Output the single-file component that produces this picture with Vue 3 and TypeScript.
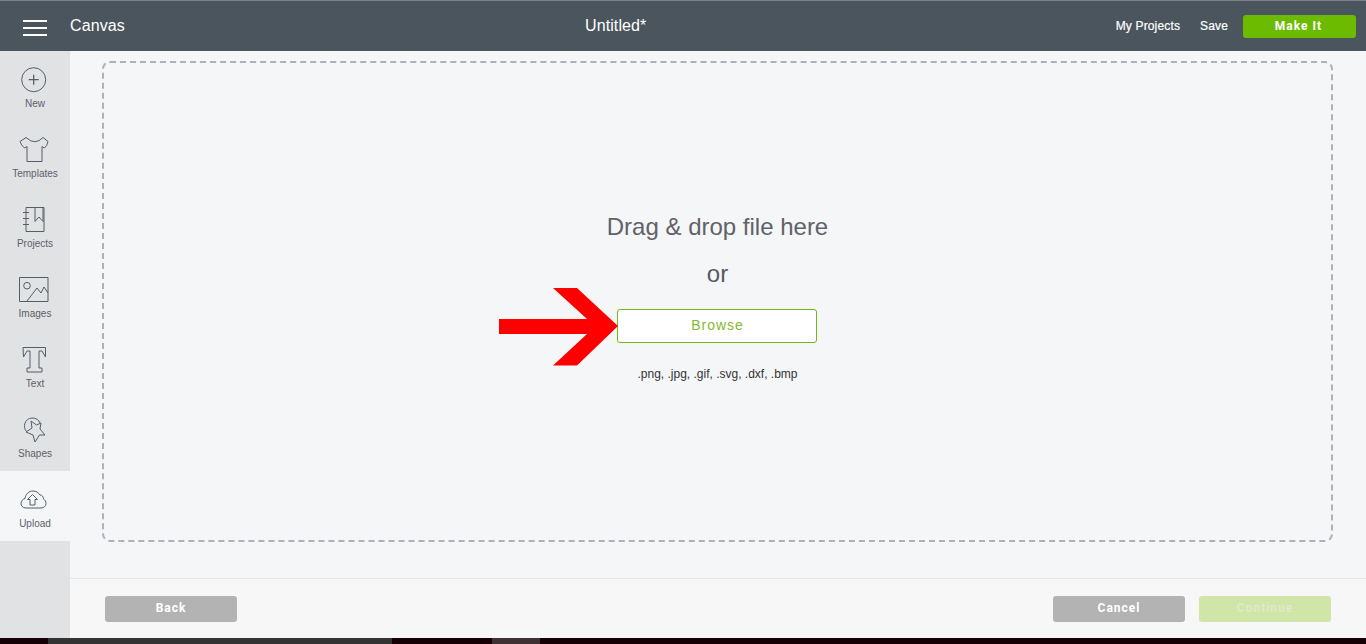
<script setup lang="ts">
const nav: { key: string; label: string }[] = [
  { key: 'new', label: 'New' },
  { key: 'templates', label: 'Templates' },
  { key: 'projects', label: 'Projects' },
  { key: 'images', label: 'Images' },
  { key: 'text', label: 'Text' },
  { key: 'shapes', label: 'Shapes' },
  { key: 'upload', label: 'Upload' },
]
</script>

<template>
  <div class="page">
    <header class="top">
      <button class="burger" aria-label="Menu"><i></i><i></i><i></i></button>
      <span class="brand">Canvas</span>
      <span class="title">Untitled*</span>
      <nav class="actions">
        <a class="link">My Projects</a>
        <a class="link">Save</a>
        <button class="make">Make It</button>
      </nav>
    </header>
    <div class="body">
      <aside class="side">
        <div v-for="n in nav" :key="n.key" class="item" :class="{ active: n.key === 'upload' }">
          <svg width="40" height="32" viewBox="0 0 40 32" fill="none" stroke="#565d67" stroke-width="1">
            <template v-if="n.key === 'new'">
              <circle cx="18.700" cy="15.700" r="12" />
              <path d="M18.700 10.700v10M13.700 15.700h10" stroke-width="1.300" />
            </template>
            <template v-else-if="n.key === 'templates'">
              <path d="M11 3.500Q20 12 28 3.500L33 7.500Q32 12 29.500 14L27 12.500V27.500H12V12.500L9.500 14Q6 11 5 7.500Z" />
            </template>
            <template v-else-if="n.key === 'projects'">
              <path d="M11 3.500h18v24H11z" />
              <path d="M8 8.500h6M8 14.500h6M8 20.500h6" />
              <path d="M20 3.500v14l4-4.500 4 4.500v-14" />
            </template>
            <template v-else-if="n.key === 'images'">
              <path d="M4.500 3.500h28.500v24H4.500z" />
              <circle cx="12" cy="11.700" r="3.300" />
              <path d="M12 27L22 14L26 19L29 13L33 19" />
            </template>
            <template v-else-if="n.key === 'text'">
              <path d="M8 3.500H30.500V13L27 7H24V24H27V28H12V24H15V7H12L8.500 13Z" />
            </template>
            <template v-else-if="n.key === 'shapes'">
              <path d="M11.500 17.500C7.500 13 9.500 4.500 17 4C21 3.800 24 6 25 9" />
              <path d="M16 7L21.500 11L26 9L25 15L30 21L24.500 21L20 28L18 21L11 18L17 14Z" />
            </template>
            <template v-else>
              <path d="M11 24C7.500 24 6 21.500 6 19.500C6 17 8 15 10 14.500C10.500 10 14 7 18 7C21 7 23.500 8.500 25 11C27 11 28.500 12.500 28.500 15C30 16 31 17.500 31 19.500C31 22 29 24 26 24Z" />
              <path d="M17.500 10.500L22.500 15.500H20V21H15V15.500H12.500Z" />
            </template>
          </svg>
          <span>{{ n.label }}</span>
        </div>
      </aside>
      <main class="main">
        <section class="stage">
          <div class="drop">
            <p class="drag">Drag &amp; drop file here</p>
            <p class="or">or</p>
            <div class="browse-wrap">
              <svg class="arrow" width="120" height="78" viewBox="0 0 120 78">
                <path d="M0 31H88L54 0H78L119 38L78 77.500H54L88 46H0Z" fill="#ff0000" />
              </svg>
              <button class="browse">Browse</button>
            </div>
            <p class="types">.png, .jpg, .gif, .svg, .dxf, .bmp</p>
          </div>
        </section>
        <footer class="foot">
          <button class="btn grey">Back</button>
          <span class="right">
            <button class="btn grey">Cancel</button>
            <button class="btn off">Continue</button>
          </span>
        </footer>
      </main>
    </div>
    <div class="strip"><i class="s1"></i><i class="s2"></i></div>
  </div>
</template>

<style>
html, body { margin: 0; background: #f5f6f8; overflow: hidden; }
</style>

<style scoped>
.page {
  width: 1366px;
  height: 644px;
  display: flex;
  flex-direction: column;
  font-family: "Liberation Sans", Arial, sans-serif;
  overflow: hidden;
}
.top {
  height: 50px;
  flex: none;
  border-top: 1px solid #7d8389;
  background: #4a555e;
  color: #fff;
  display: flex;
  align-items: center;
  position: relative;
}
.burger {
  width: 70px;
  height: 100%;
  background: none;
  border: 0;
  padding: 4px 0 0;
  display: flex;
  flex-direction: column;
  align-items: center;
  justify-content: center;
  gap: 5px;
}
.burger i { display: block; width: 24px; height: 2px; background: #fff; }
.brand { font-size: 16px; letter-spacing: 0.1px; margin-bottom: 1px; }
.title {
  position: absolute;
  left: 585px;
  top: 15px;
  font-size: 16px;
  letter-spacing: 0.1px;
  line-height: 20px;
}
.actions {
  margin-left: auto;
  display: flex;
  align-items: center;
  padding-right: 10px;
}
.link { font-size: 12px; letter-spacing: 0.15px; margin-right: 20px; -webkit-text-stroke: 0.2px #fff; }
.make {
  margin-left: -5px;
  width: 113px;
  height: 23px;
  padding: 0 2px 0 0;
  background: #6cbb00;
  border: 0;
  border-radius: 3px;
  color: #fff;
  font: bold 12px Roboto, sans-serif;
  letter-spacing: 1px;
}
.body { flex: 1; min-height: 0; display: flex; }
.side {
  width: 70px;
  flex: none;
  background: #e1e2e4;
  display: flex;
  flex-direction: column;
}
.item {
  height: 70px;
  flex: none;
  box-sizing: border-box;
  padding-top: 13px;
  display: flex;
  flex-direction: column;
  align-items: center;
  color: #5a616a;
  font-size: 10px;
}
.item span { margin-top: 2px; line-height: 12px; }
.item.active { background: #f5f6f8; }
.main { flex: 1; min-width: 0; display: flex; flex-direction: column; }
.stage {
  flex: 1;
  min-height: 0;
  background: #f5f6f8;
  box-sizing: border-box;
  padding: 10px 33px 36px 32px;
  border-bottom: 1px solid #e6e7e9;
  display: flex;
}
.drop {
  flex: 1;
  box-sizing: border-box;
  border: 2px dashed #aeb2b8;
  border-radius: 8px;
  display: flex;
  flex-direction: column;
  align-items: center;
  padding-top: 150px;
}
p { margin: 0; }
.drag { font-size: 24px; line-height: 28px; color: #5f6368; }
.or { font-size: 24px; line-height: 28px; color: #555b64; margin-top: 19px; }
.browse-wrap { position: relative; margin: 21px 2px 0 0; }
.arrow { position: absolute; left: -118px; top: -21px; }
.browse {
  display: block;
  width: 200px;
  height: 34px;
  box-sizing: border-box;
  padding: 0 0 2px 2px;
  background: #fff;
  border: 1px solid #76b51a;
  border-radius: 3px;
  color: #84ba2e;
  font: 14px "Liberation Sans", Arial, sans-serif;
  letter-spacing: 1px;
}
.types { margin-top: 24px; font-size: 12px; line-height: 14px; color: #333; }
.foot {
  height: 59px;
  flex: none;
  box-sizing: border-box;
  background: #f7f7f8;
  padding: 17px 35px 0;
  display: flex;
  justify-content: space-between;
  align-items: flex-start;
}
.right { display: flex; gap: 14px; }
.btn {
  width: 132px;
  height: 26px;
  padding: 0 0 2px;
  border: 0;
  border-radius: 3px;
  color: #fff;
  font: bold 12px Roboto, sans-serif;
  letter-spacing: 1px;
}
.grey { background: #b3b3b3; }
.off { background: #d0e6a8; color: #dfeac8; }
.strip {
  height: 6px;
  flex: none;
  background: #150005;
  position: relative;
}
.strip i { position: absolute; top: 0; bottom: 0; }
.s1 { left: 48px; width: 344px; background: #333; }
.s2 { left: 492px; width: 48px; background: #3f3033; }
</style>
